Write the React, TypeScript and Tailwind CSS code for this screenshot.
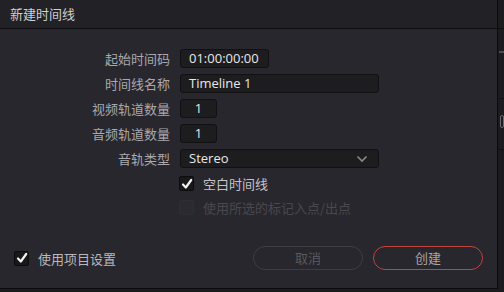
import React from "react";

const font = { fontFamily: '"Noto Sans CJK SC", "Noto Sans", sans-serif' };

function Check({ checked, disabled }: { checked?: boolean; disabled?: boolean }) {
  return (
    <div
      className={
        "w-[15px] h-[15px] rounded-[2px] border flex items-center justify-center " +
        (disabled ? "border-[#2e2e33] bg-[#2a2a2f]" : "border-[#0c0c0e] bg-[#18181a]")
      }
    >
      {checked && (
        <svg width="12" height="12" viewBox="0 0 12 12">
          <path d="M2 6.5 L4.8 9.5 L10.2 2" stroke="#f2f2f2" strokeWidth="2.2" fill="none" strokeLinecap="round" strokeLinejoin="round" />
        </svg>
      )}
    </div>
  );
}

function Row({ label, children }: { label: string; children: React.ReactNode }) {
  return (
    <div className="flex items-center h-[19px]">
      <div className="w-[171px] pr-[1px] text-right text-[13px] text-[#a9a9ad] leading-none">{label}</div>
      <div className="ml-[9px] flex">{children}</div>
    </div>
  );
}

function Input({ w, children, center }: { w: string; children: React.ReactNode; center?: boolean }) {
  return (
    <div
      className={
        w +
        " h-[19px] rounded-[3px] border border-[#111113] bg-[#1d1d20] text-[13px] text-[#e8e8ea] flex items-center leading-none " +
        (center ? "justify-center" : "pl-[8px]")
      }
      style={{ fontFamily: '"Open Sans", "Noto Sans", sans-serif' }}
    >
      {children}
    </div>
  );
}

export default function App() {
  return (
    <div className="w-[504px] h-[292px] bg-[#19191c] flex flex-col overflow-hidden" style={font}>
      <div className="flex h-[289px]">
        <div className="w-[498px] h-[289px] flex flex-col border-r border-b border-[#0b0b0c] bg-[#28272d]">
          <div className="h-[29px] shrink-0 bg-[#222126] border-b border-[#0e0e10] flex items-center pl-[10px] text-[13px] text-[#cfcfd2]">
            新建时间线
          </div>
          <div className="flex flex-col gap-[6px] pt-[20px]">
            <Row label="起始时间码">
              <Input w="w-[89px]">01:00:00:00</Input>
            </Row>
            <Row label="时间线名称">
              <Input w="w-[199px]">Timeline 1</Input>
            </Row>
            <Row label="视频轨道数量">
              <Input w="w-[37px]" center>1</Input>
            </Row>
            <Row label="音频轨道数量">
              <Input w="w-[37px]" center>1</Input>
            </Row>
            <Row label="音轨类型">
              <Input w="w-[199px]">
                <span className="flex-1">Stereo</span>
                <svg width="12" height="8" viewBox="0 0 12 8" className="mr-[10px]">
                  <path d="M1.5 1.5 L6 6 L10.5 1.5" stroke="#8a8a8e" strokeWidth="1.6" fill="none" />
                </svg>
              </Input>
            </Row>
          </div>
          <div className="flex items-center ml-[179px] mt-[8px] h-[15px] gap-[9px]">
            <Check checked />
            <span className="text-[13px] text-[#c4c4c8] leading-none">空白时间线</span>
          </div>
          <div className="flex items-center ml-[179px] mt-[9px] h-[15px] gap-[9px]">
            <Check disabled />
            <span className="text-[13px] text-[#48484d] leading-none">使用所选的标记入点/出点</span>
          </div>
          <div className="flex items-center mt-[31px] pl-[14px] h-[24px]">
            <Check checked />
            <span className="ml-[9px] text-[13px] text-[#b8b8bd] leading-none">使用项目设置</span>
            <div className="flex-1" />
            <div className="w-[110px] h-[24px] rounded-full border border-[#3d3d42] flex items-center justify-center text-[13px] text-[#58585d]">
              取消
            </div>
            <div className="ml-[10px] mr-[14px] w-[110px] h-[24px] rounded-full border border-[#c2433a] flex items-center justify-center text-[13px] text-[#a5a5aa]">
              创建
            </div>
          </div>
        </div>
        <div className="flex-1 relative bg-[#1c1c1f]">
          <div className="absolute left-0 right-0 top-[28px] h-[1px] bg-[#111]" />
          <div className="absolute left-[1px] right-0 top-[51px] h-[2px] bg-[#4a4d55]" />
          <div className="absolute left-[1px] right-0 top-[98px] h-[1px] bg-[#111]" />
          <div className="absolute left-[2px] right-0 top-[115px] h-[13px] border border-[#6a6a70] rounded-[2px]" />
          <div className="absolute left-0 right-0 top-[149px] h-[1px] bg-[#111]" />
        </div>
      </div>
      <div className="flex-1 bg-[#1c1c1f]" />
    </div>
  );
}
